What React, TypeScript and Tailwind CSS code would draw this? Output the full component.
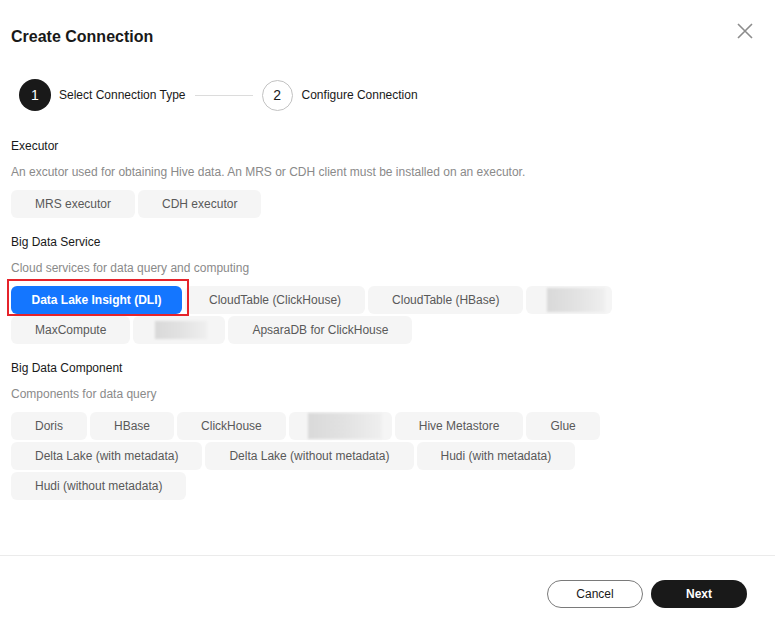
import React from 'react';

type Chip = { label?: string; blur?: { pl: number; w: number; pr: number; h: number } };

const executorRows: Chip[][] = [[{ label: 'MRS executor' }, { label: 'CDH executor' }]];

const serviceRows: Chip[][] = [
  [
    { label: 'Data Lake Insight (DLI)' },
    { label: 'CloudTable (ClickHouse)' },
    { label: 'CloudTable (HBase)' },
    { blur: { pl: 21, w: 58, pr: 7, h: 24 } },
  ],
  [
    { label: 'MaxCompute' },
    { blur: { pl: 22, w: 52, pr: 18, h: 18 } },
    { label: 'ApsaraDB for ClickHouse' },
  ],
];

const componentRows: Chip[][] = [
  [
    { label: 'Doris' },
    { label: 'HBase' },
    { label: 'ClickHouse' },
    { blur: { pl: 19, w: 74, pr: 10, h: 26 } },
    { label: 'Hive Metastore' },
    { label: 'Glue' },
  ],
  [
    { label: 'Delta Lake (with metadata)' },
    { label: 'Delta Lake (without metadata)' },
    { label: 'Hudi (with metadata)' },
  ],
  [{ label: 'Hudi (without metadata)' }],
];

const SELECTED = 'Data Lake Insight (DLI)';

const ChipButton: React.FC<{ chip: Chip }> = ({ chip }) => {
  if (chip.blur) {
    const b = chip.blur;
    return (
      <div
        className="h-[28px] rounded-[6px] bg-[#f5f5f5] flex items-center"
        style={{ paddingLeft: b.pl, paddingRight: b.pr }}
      >
        <div
          className="bg-gradient-to-r from-[#d9d9d9] via-[#e2e2e2] to-[#efefef] blur-[1px]"
          style={{ width: b.w, height: b.h }}
        />
      </div>
    );
  }
  if (chip.label === SELECTED) {
    return (
      <div className="relative">
        <div className="h-[28px] w-[171px] rounded-[6px] bg-[#1476ff] text-white text-[12px] font-bold flex items-center justify-center whitespace-nowrap">
          {chip.label}
        </div>
        {/* annotation box */}
        <div className="absolute -left-[4px] -right-[7px] -top-[7px] -bottom-[2px] border-2 border-[#e5232b] pointer-events-none" />
      </div>
    );
  }
  return (
    <div className="h-[28px] px-6 rounded-[6px] bg-[#f5f5f5] text-[#595959] text-[12px] flex items-center whitespace-nowrap">
      {chip.label}
    </div>
  );
};

const Section: React.FC<{ title: string; desc: string; rows: Chip[][]; className?: string }> = ({
  title,
  desc,
  rows,
  className,
}) => (
  <div className={className}>
    <div className="text-[12px] leading-[18px] text-[#191919]">{title}</div>
    <div className="mt-[8px] text-[12px] leading-[18px] text-[#8a8a8a]">{desc}</div>
    <div className="mt-[9px] flex flex-col gap-[2px]">
      {rows.map((row, i) => (
        <div key={i} className="flex gap-[3px]">
          {row.map((chip, j) => (
            <ChipButton key={j} chip={chip} />
          ))}
        </div>
      ))}
    </div>
  </div>
);

export default function App() {
  return (
    <div
      className="w-[775px] h-[622px] bg-white flex flex-col relative"
      style={{ fontFamily: '"Liberation Sans", Arial, sans-serif' }}
    >
      <div className="flex-1 px-[11px]">
        <div className="pt-[27px] flex items-center justify-between">
          <h1 className="text-[16px] leading-[20px] font-bold text-[#191919]">Create Connection</h1>
          <button className="mr-[11px] -mt-[12px] text-[#8c8c8c]" aria-label="Close">
            <svg width="16" height="16" viewBox="0 0 16 16" fill="none" stroke="currentColor" strokeWidth="1.6">
              <path d="M1 1L15 15M15 1L1 15" />
            </svg>
          </button>
        </div>

        <div className="mt-[32px] ml-[8px] flex items-center">
          <div className="w-[32px] h-[32px] rounded-full bg-[#191919] text-white text-[14px] flex items-center justify-center">
            1
          </div>
          <span className="ml-[8px] text-[12px] text-[#191919]">Select Connection Type</span>
          <div className="mx-[9px] w-[58px] h-px bg-[#dcdcdc]" />
          <div className="w-[31px] h-[31px] rounded-full border border-[#c2c2c2] text-[#191919] text-[14px] flex items-center justify-center">
            2
          </div>
          <span className="ml-[9px] text-[12px] text-[#191919]">Configure Connection</span>
        </div>

        <Section
          className="mt-[26px]"
          title="Executor"
          desc="An excutor used for obtaining Hive data. An MRS or CDH client must be installed on an executor."
          rows={executorRows}
        />
        <Section
          className="mt-[15px]"
          title="Big Data Service"
          desc="Cloud services for data query and computing"
          rows={serviceRows}
        />
        <Section
          className="mt-[15px]"
          title="Big Data Component"
          desc="Components for data query"
          rows={componentRows}
        />
      </div>

      <div className="h-[67px] border-t border-[#ebebeb] pt-[24px] pr-[28px] flex justify-end gap-[8px]">
        <button className="w-[96px] h-[28px] rounded-full border border-[#7a7a7a] text-[12px] text-[#191919]">
          Cancel
        </button>
        <button className="w-[96px] h-[28px] rounded-full bg-[#191919] text-[12px] font-bold text-white">
          Next
        </button>
      </div>
    </div>
  );
}
